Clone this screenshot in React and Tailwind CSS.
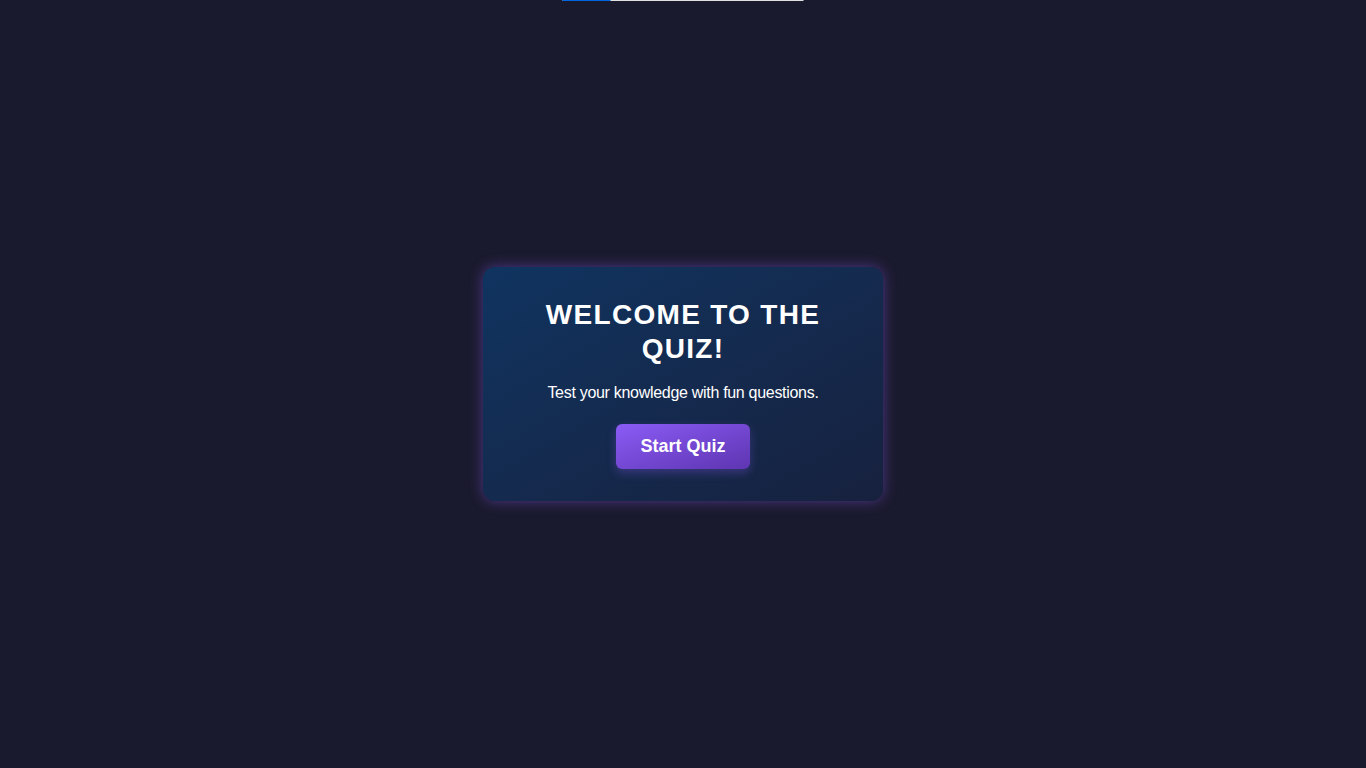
import React from "react";

export default function App() {
  const progress = 20;

  return (
    <div
      className="relative min-h-screen w-full bg-[#1a1a2e] flex items-center justify-center"
      style={{ fontFamily: '"Liberation Sans", Arial, sans-serif' }}
    >
      {/* top progress */}
      <div className="absolute top-0 left-1/2 -translate-x-1/2 w-[241px] h-px bg-[#e0e0e0]">
        <div className="h-full bg-[#0066e0]" style={{ width: `${progress}%` }} />
      </div>

      <div className="w-[400px] rounded-xl bg-gradient-to-br from-[#0f3460] to-[#16213e] px-8 pt-[31px] pb-8 text-center text-white shadow-[0_0_14px_rgba(139,92,246,0.45)]">
        <h2 className="text-[28px] leading-[1.2] font-bold uppercase tracking-[1.3px] mb-[15px]">
          Welcome to the Quiz!
        </h2>
        <p className="text-base leading-6 tracking-[-0.3px] text-white">
          Test your knowledge with fun questions.
        </p>
        <button className="mt-[19px] px-6 py-3 rounded-md bg-gradient-to-br from-[#8b5cf6] to-[#5e35b1] text-lg leading-[21px] font-bold text-white shadow-[0_4px_10px_rgba(139,92,246,0.3)]">
          Start Quiz
        </button>
      </div>
    </div>
  );
}
